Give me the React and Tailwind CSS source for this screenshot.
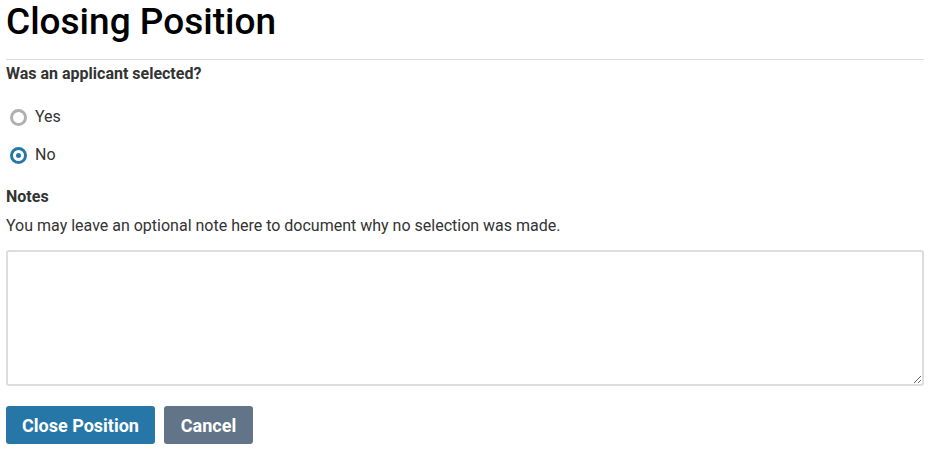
import React, { useState } from "react";

const Radio = ({ checked, label, onChange }) => (
  <label className="flex items-center gap-[8px] h-[22px] cursor-pointer">
    <span
      className={
        "w-[17px] h-[17px] rounded-full border-[3px] flex items-center justify-center bg-white " +
        (checked ? "border-[#2677a8]" : "border-[#b0b0b0]")
      }
      onClick={onChange}
    >
      {checked && <span className="w-[5px] h-[5px] rounded-full bg-[#2677a8]" />}
    </span>
    <span className="text-[16px] text-[#333]">{label}</span>
  </label>
);

export default function App() {
  const [selected, setSelected] = useState("no");

  return (
    <div className="font-['Roboto',sans-serif] text-[#333] pl-[6px] w-[924px]">
      <h1 className="text-[37px] leading-[44px] font-medium text-black">Closing Position</h1>
      <hr className="border-t border-[#ddd] mt-[15px] mb-[5px]" />

      <p className="text-[16px] font-bold leading-[18px]">Was an applicant selected?</p>
      <div className="flex flex-col gap-[16px] mt-[23px] pl-[4px]">
        <Radio checked={selected === "yes"} label="Yes" onChange={() => setSelected("yes")} />
        <Radio checked={selected === "no"} label="No" onChange={() => setSelected("no")} />
      </div>

      <p className="text-[16px] font-bold leading-[18px] mt-[22px]">Notes</p>
      <p className="text-[16px] leading-[20px] mt-[10px]">
        You may leave an optional note here to document why no selection was made.
      </p>
      <textarea className="block w-[918px] h-[136px] mt-[14px] border-2 border-[#ddd] rounded-[3px] bg-white outline-none" />

      <div className="flex gap-[9px] mt-[20px]">
        <button className="h-[38px] w-[149px] bg-[#2677a8] text-white text-[18px] font-bold rounded-[3px]">
          Close Position
        </button>
        <button className="h-[38px] w-[89px] bg-[#627588] text-white text-[18px] font-bold rounded-[3px]">
          Cancel
        </button>
      </div>
    </div>
  );
}
